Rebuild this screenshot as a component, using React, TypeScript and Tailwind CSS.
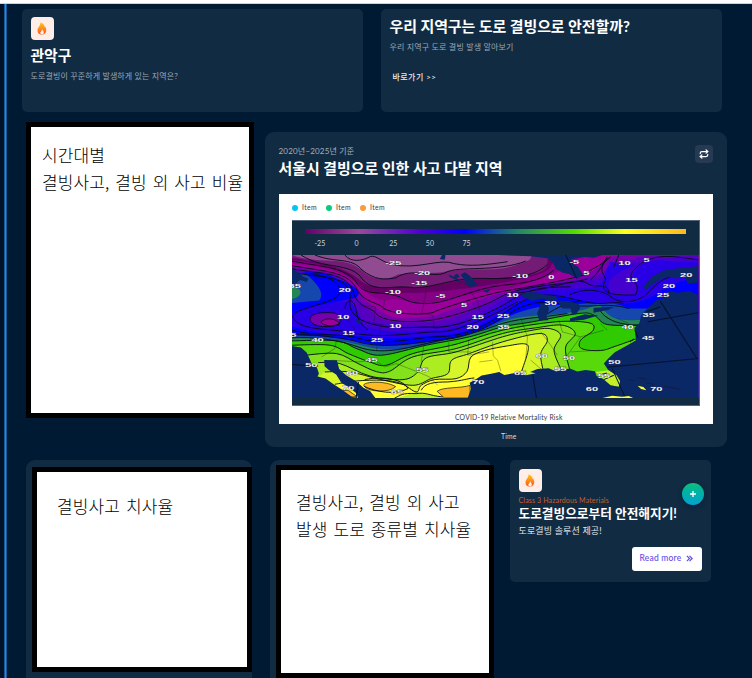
import React from "react";
import { Repeat } from "lucide-react";

type Point = [number, number];

// Catmull-Rom curve through the given points, as an SVG path.
function curve(points: Point[]) {
  let d = `M${points[0][0]},${points[0][1]}`;
  for (let i = 0; i < points.length - 1; i++) {
    const a = points[i - 1] ?? points[i];
    const b = points[i];
    const c = points[i + 1];
    const e = points[i + 2] ?? c;
    d += ` C${b[0] + (c[0] - a[0]) / 6},${b[1] + (c[1] - a[1]) / 6} ${c[0] - (e[0] - b[0]) / 6},${c[1] - (e[1] - b[1]) / 6} ${c[0]},${c[1]}`;
  }
  return d;
}

// Each temperature band covers everything below its upper edge.
const coldBands: [string, string][] = [
  ["#741b76", "M21,30 C100,60 180,30 230,75 C265,110 310,105 340,88 C400,80 450,87 480,80 C540,66 630,82 690,62 S735,45 745,30 L1244,30"],
  ["#650065", "M21,38 C100,50 180,65 225,105 C260,140 320,118 390,128 C450,128 500,102 600,100 S790,92 790,55 S820,40 830,30 L1244,30"],
  ["#840084", "M21,45 C120,55 190,80 230,125 C260,160 330,140 400,143 C500,138 600,122 640,115 S790,90 800,65 S850,50 860,30 L1244,30"],
  ["#9b009b", "M21,55 C120,65 180,80 220,120 C260,160 290,165 300,167 C350,150 360,180 430,173 S590,135 640,135 S800,90 835,75 S880,50 890,30 L1244,30"],
  ["#7700ad", "M21,62 C120,75 180,85 220,135 C240,175 280,190 300,205 C320,222 380,222 430,215 S590,155 650,145 S800,115 850,105 S955,70 965,38 L1030,30 L1244,30"],
  ["#5600c0", "M21,70 C120,85 175,85 210,140 C235,190 260,190 275,215 C320,238 380,232 440,230 S590,185 660,150 S800,120 860,108 S945,98 985,60 L1070,35 L1244,30"],
  ["#4300cf", "M21,80 C120,95 170,90 195,145 C220,200 200,190 240,225 C320,245 380,240 440,242 S590,210 660,160 S820,124 890,110 S960,110 995,60 C1080,50 1120,35 1244,40"],
  ["#2900e5", "M21,205 C50,175 120,175 190,170 C240,195 210,232 250,248 C320,268 400,256 460,255 S590,218 665,175 S800,132 890,130 S950,90 980,50 L1055,60 C980,90 970,110 975,130 C980,155 1030,155 1055,145 C1080,110 1020,110 1060,70 S1150,55 1244,50"],
  ["#0000ff", "M21,245 C100,267 160,270 235,273 C320,288 400,272 470,270 S600,236 675,190 S800,148 890,165 S1030,180 1080,165 S1160,105 1244,98"],
  ["#1547ad", "M21,272 C100,270 180,280 245,294 C320,310 400,292 480,284 S590,255 650,225 S760,180 850,178 S980,165 1035,190 L1244,190"],
  ["#238653", "M21,278 C90,275 180,286 240,303 C320,325 400,305 480,285 S590,257 650,232 S780,215 870,200 S930,160 965,200 S1040,220 1244,220"],
];

const warmBands: [string, Point[]][] = [
  ["#30ca00", [[21, 287], [155, 287], [220, 312], [290, 330], [425, 300], [555, 275], [655, 245], [745, 230], [885, 205], [930, 210], [970, 238], [1070, 240]]],
  ["#57d90b", [[21, 300], [135, 300], [190, 325], [255, 350], [305, 360], [385, 325], [515, 297], [655, 255], [815, 230], [915, 233], [928, 255], [890, 285], [893, 310], [950, 316], [995, 303], [1060, 280]]],
  ["#83e21b", [[60, 330], [155, 325], [220, 355], [275, 379], [315, 378], [385, 335], [515, 310], [655, 265], [755, 248], [835, 240], [874, 265], [845, 305], [855, 365], [862, 376]]],
  ["#aced22", [[100, 352], [165, 355], [255, 392], [355, 403], [400, 380], [425, 338], [515, 320], [655, 275], [735, 257], [795, 250], [830, 270], [810, 315], [832, 374]]],
  ["#d6f52a", [[120, 380], [195, 380], [285, 402], [385, 420], [440, 400], [490, 385], [502, 345], [555, 325], [655, 290], [765, 265], [790, 285], [770, 325], [777, 374]]],
  ["#ffff32", [[150, 417], [215, 407], [295, 405], [350, 415], [395, 440], [410, 420], [450, 403], [515, 400], [548, 378], [560, 335], [605, 315], [670, 302], [722, 296], [732, 315], [710, 385]]],
];

const lines = [
  "M180,30 C200,55 235,45 250,38 C270,25 280,45 320,58 C400,76 465,38 510,56 C560,65 600,60 670,50",
  "M90,30 C150,55 200,35 232,75 C270,105 300,105 335,98 C380,65 450,102 485,82 S640,82 725,48",
  "M48,30 C120,77 200,48 235,105 C275,145 320,118 390,128 C450,128 510,96 600,100 S760,90 790,58",
  "M21,48 C110,66 190,65 220,120 C250,158 300,132 355,160 C410,190 475,170 520,155 S610,125 660,120 S770,110 810,75",
  "M21,62 C125,80 190,80 216,132 C240,175 280,170 298,190 C330,210 430,210 450,200 S600,150 650,140 S810,115 900,90",
  "M21,71 C105,88 180,78 205,138 C220,195 260,180 280,212 C320,235 400,230 440,225 S590,190 650,155 S850,120 910,102",
  "M21,80 C90,100 165,87 190,130 C210,165 170,185 230,225 C310,260 390,243 450,246 S610,210 680,166 S790,128 860,125",
  "M75,85 C115,90 175,110 165,145 C155,175 20,190 23,215 C40,255 120,250 190,260 C290,285 400,259 460,260 S620,215 700,170",
  "M75,226 C73,201 115,202 140,203 C165,203 172,220 162,238 C140,248 85,248 75,226",
  "M180,190 C185,160 205,160 213,188 C215,215 228,240 250,255",
  "M21,255 C100,277 170,260 235,283 C310,302 390,276 470,274 S610,240 680,190 S800,143 880,165 S980,165 1020,175",
  "M21,266 C100,270 170,275 235,294 C320,312 410,289 480,283 S610,246 680,203 S800,170 860,180 S970,170 1035,190",
  "M21,278 C90,274 165,285 220,305 C290,330 360,310 430,294 S560,269 630,243 S760,220 850,205",
  "M240,403 C300,390 360,405 370,430 C330,450 275,440 238,423",
  "M410,435 C420,413 450,410 490,410 C540,406 545,400 570,398",
  "M395,445 C350,442 350,450 330,458 M395,445 C425,440 430,450 475,455",
  "M970,36 C930,90 980,90 960,115 C950,150 1000,150 1055,150 C1080,100 1010,110 1060,65 S1180,35 1244,45",
  "M855,150 C920,120 965,145 975,150 C1010,185 1070,165 1085,150 C1130,110 1130,90 1244,85",
  "M900,90 C930,65 960,60 970,38 M920,105 C960,65 945,65 980,35 M690,145 C820,130 880,95 910,115 S970,105 975,145",
  "M780,212 C830,180 850,175 885,168 M945,190 C960,220 1000,240 1065,240",
];

const borders =
  "M28,65 L35,120 M225,180 L272,185 L268,235 L297,240 M300,165 L295,195 M425,137 L412,205 M412,205 L445,210 L450,250 L535,235 M560,142 L580,170 L590,225 M290,235 L275,315 M420,290 L410,350 M493,292 L493,320 L560,320 M553,285 L550,330 L615,320 M155,285 L150,310 L110,335 M190,225 L210,250 L200,275 M140,345 L220,350 L270,345 L300,365 L335,355 L400,380 L435,395 L460,420 M625,290 L627,332 L640,345 L650,378 M585,350 L625,345 M710,220 L730,275 L725,340 M770,260 L800,300 L820,330 M825,225 L835,260 L890,275 L850,330 M890,275 L960,255 M950,235 L970,255 M740,345 L775,375 M860,320 L950,315 M1000,220 L1035,235";

const labels: [string, number, number][] = [
  ["-25", 326, 59], ["-20", 413, 89], ["-15", 404, 121], ["-10", 325, 147], ["-5", 468, 160],
  ["20", 180, 140], ["35", 29, 128], ["0", 343, 206], ["5", 539, 187], ["10", 175, 223],
  ["10", 332, 249], ["15", 580, 221], ["15", 191, 268], ["20", 565, 251], ["25", 277, 290],
  ["35", 16, 275], ["40", 98, 290], ["45", 260, 349], ["50", 79, 364], ["60", 202, 389],
  ["55", 413, 381], ["70", 190, 433], ["65", 337, 445], ["70", 582, 416],
  ["-5", 871, 56], ["10", 1022, 59], ["5", 1089, 52], ["-10", 708, 98], ["0", 802, 103],
  ["5", 907, 90], ["15", 1043, 110], ["20", 1208, 95], ["20", 1156, 129], ["25", 1138, 157],
  ["10", 685, 156], ["30", 800, 181], ["25", 657, 220], ["35", 1095, 215], ["35", 658, 252],
  ["40", 1031, 250], ["45", 1093, 283], ["60", 773, 338], ["50", 855, 344], ["50", 992, 357],
  ["55", 829, 376], ["65", 708, 390], ["55", 960, 398], ["60", 924, 437], ["70", 1118, 437],
];

function WeatherMap() {
  return (
    <svg className="block h-[143px] w-full" viewBox="21 30 1224 428" preserveAspectRatio="none">
      <rect x="21" y="30" width="1224" height="428" fill="#904b91" />
      {coldBands.map(([fill, d]) => (
        <path key={fill} d={d + " L1244,458 L21,458 Z"} fill={fill} />
      ))}
      {warmBands.map(([fill, points]) => (
        <path key={fill} d={curve(points) + " V458 H21 Z"} fill={fill} />
      ))}
      <path d="M862,376 C840,345 842,325 845,305 L880,285 L893,310 L950,316 L995,303 L1060,280 L1060,440 L862,440 Z" fill="#57d90b" />
      <path d="M935,380 L975,375 L1000,390 L1009,407 L1005,424 L980,420 Z" fill="#c5ef28" />
      <path d="M21,92 C70,75 110,75 155,100 C205,118 240,140 213,158 C140,175 80,181 21,206 Z" fill="#0000ff" />
      <path d="M21,78 L65,88 C98,117 120,143 103,166 L21,174 Z" fill="#1547ad" />
      <path d="M21,123 C56,130 54,155 21,162 Z" fill="#238653" />
      <path d="M75,226 C73,201 115,202 140,203 C165,203 172,220 162,238 C140,248 85,248 75,226 Z" fill="#7700ad" />
      <path d="M108,230 C125,214 158,222 164,236 C144,246 115,243 108,230 Z" fill="#9b009b" stroke="#080d19" strokeWidth="2.5" />
      <path d="M340,458 L395,440 L480,458 Z" fill="#b8f024" />
      <path d="M240,424 C220,410 300,403 333,424 C316,443 250,440 240,424 Z M160,435 L190,435 L217,454 L198,455 Z M458,438 C475,424 530,430 557,420 L558,458 L480,458 Z" fill="#ffb923" stroke="#080d19" strokeWidth="2" />
      <g fill="none" stroke="#080d19" strokeWidth="2.8">
        {lines.map((d) => <path key={d} d={d} />)}
        {warmBands.map(([fill, points]) => <path key={fill} d={curve(points)} />)}
      </g>
      <path d={borders} fill="none" stroke="#101820" strokeOpacity=".55" strokeWidth="1.8" />
      <g fill="#0a2766">
        <path d="M1244,150 L1217,138 L1180,143 L1155,137 L1142,159 L1117,166 L1102,181 L1085,195 L1072,212 L1067,234 L1052,248 L1057,285 L1031,300 L993,321 L972,341 L960,355 L973,374 L998,390 L1009,407 L1005,424 L980,420 L958,401 L938,392 L933,378 L905,374 L880,379 L858,370 L831,374 L817,379 L794,369 L760,371 L738,380 L755,384 L725,390 L700,382 L660,389 L645,380 L617,386 L592,391 L575,402 L556,412 L560,430 L550,458 L1244,458 Z" />
        <path d="M21,302 L48,307 L65,322 L76,345 L80,355 L96,367 L102,385 L98,394 L122,400 L145,416 L173,434 L202,455 L225,458 L21,458 Z" />
        <path d="M118,344 L156,345 L163,371 L184,390 L214,408 L236,427 L256,437 L272,458 L220,458 L214,443 L190,424 L170,413 L154,388 L132,374 L119,363 Z" />
        <path d="M21,72 L38,80 L55,95 L70,100 L66,111 L46,105 L26,119 L21,116 Z M492,88 L506,94 L520,99 L526,94 L518,86 L508,92 L530,110 L548,118 L529,88 L542,82 L559,94 L579,118 L571,124 L557,125 L540,115 L522,108 L496,96 Z M595,138 L620,131 L610,143 Z M473,30 L483,30 L481,44 L466,42 Z M213,222 L233,228 L224,236 L216,231 Z" />
        <path d="M640,30 L740,34 L790,40 L808,54 L815,72 L837,83 L855,87 L881,101 L897,88 L882,65 L868,58 L862,42 L905,36 L930,38 L955,30 Z" />
        <path d="M708,151 L726,141 L760,142 L782,150 L812,153 L823,163 L800,170 L778,160 L742,167 Z M770,175 L789,177 L795,192 L787,213 L793,225 L765,226 L759,205 L765,190 Z M819,166 L855,168 L885,178 L889,188 L877,207 L864,208 L860,190 L835,190 Z M858,220 L902,207 L943,211 L900,224 L858,228 Z M929,188 L991,185 L975,194 L929,203 Z" />
        <path d="M1078,125 L1105,95 L1145,74 L1174,71 L1244,63 L1244,112 L1212,116 L1205,96 L1178,100 L1146,95 L1113,113 L1086,135 Z M1199,154 L1226,147 L1214,160 Z" />
      </g>
      <path d="M946,390 L969,383 M960,403 L990,390 M1054,255 L1063,278 M1038,290 L1051,281 M1090,200 L1130,185" stroke="#0a1020" strokeWidth="3" />
      <path d="M845,30 L878,100 M746,389 L757,458 M985,370 L1025,458 M1130,168 L1240,340 M1092,230 L1244,203 M970,366 L1244,340 M21,358 L100,362 M221,410 L214,458 M1005,30 L990,65" stroke="#07122b" strokeWidth="3" />
      <path d="M956,458 L985,451 L1015,454 L1035,452 L1048,458 Z M1062,421 L1079,425 L1088,435 L1072,431 Z" fill="#ffff32" />
      <path d="M1036,403 L1052,406 M1063,397 L1087,402 M1088,412 L1112,418 M1142,423 L1190,432" stroke="#151e3e" strokeWidth="3" />
      <g fill="#eef0f6" stroke="#383850" strokeWidth="1.2" paintOrder="stroke" fontFamily="Liberation Sans, Arial, sans-serif" fontSize="18" fontWeight="bold" textAnchor="middle">
        {labels.map(([t, x, y]) => (
          <text key={t + x + y} transform={`translate(${x} ${y}) scale(1.85 1)`}>{t}</text>
        ))}
      </g>
    </svg>
  );
}

function FlameBadge() {
  return (
    <div className="flex size-[23px] items-center justify-center rounded-[4px] bg-[#ffede7]">
      <svg className="h-[13px] w-[10px]" viewBox="0 0 20 26">
        <defs>
          <linearGradient id="flame" x1="0" y1="0" x2="0" y2="1">
            <stop offset="0" stopColor="#ffc514" />
            <stop offset=".5" stopColor="#ff8b16" />
            <stop offset="1" stopColor="#ff5320" />
          </linearGradient>
        </defs>
        <path d="M7 1 C13 3 15 6 15 10 L16.5 9 C18.5 13 19 16 18 20 C16 24 12 25.5 9.5 25.5 C4 25 1 22 1 17 C1 11 7 8 7 1Z" fill="url(#flame)" />
        <path d="M10 14 C11 17 13.500 18 13.500 21 C13.500 24 12 25 10 25 C7.500 25 6.500 22 6.500 20 L8 20 C8 18 10 17 10 14Z" fill="#fff1e6" />
      </svg>
    </div>
  );
}

function Note({ className, children }: { className: string; children: React.ReactNode }) {
  return (
    <div className={"shrink-0 whitespace-nowrap border-[5px] border-black bg-white font-['Noto_Sans_CJK_KR',sans-serif] text-[17px] font-light leading-[27px] tracking-[0.12px] text-black [word-spacing:2px] " + className}>
      {children}
    </div>
  );
}

export default function App() {
  return (
    <div className="flex h-[678px] w-[752px] flex-col overflow-hidden bg-[#001a33] font-[Lato,'Noto_Sans_CJK_KR',sans-serif] text-white">
      <div className="h-1 shrink-0 border-b border-[#cbd1d5] bg-white" />
      <div className="flex min-h-0 flex-1">
        <div className="w-1 shrink-0 bg-[#001329]" />
        <div className="w-[3px] shrink-0 border-x border-[#155b9b] bg-[#1492f0]" />
        <main className="min-w-0 flex-1">
          <section className="ml-[14.5px] mt-[5px] flex h-[102.5px] gap-[17.5px] whitespace-nowrap">
            <div className="w-[341.5px] rounded-[5px] bg-[#112b43] pl-[9px] pt-[8px]">
              <FlameBadge />
              <h2 className="mt-[6px] text-[14.8px] font-bold leading-[18px]">관악구</h2>
              <p className="mt-[6px] text-[8px] leading-[12px] tracking-[0.14px] text-[#9ba9b7]">도로결빙이 꾸준하게 발생하게 있는 지역은?</p>
            </div>
            <div className="w-[341.5px] rounded-[5px] bg-[#112b43] pl-[9px] pt-[8px]">
              <h2 className="text-[15px] font-bold leading-[18px] tracking-[-0.1px]">우리 지역구는 도로 결빙으로 안전할까?</h2>
              <p className="mt-[6px] text-[8px] leading-[12px] tracking-[0.17px] text-[#9ba9b7]">우리 지역구 도로 결빙 발생 알아보기</p>
              <a className="ml-[3px] mt-[18px] block text-[8px] font-medium leading-[12px] tracking-[0.45px] text-[#e8edf1]">바로가기 &gt;&gt;</a>
            </div>
          </section>

          <section className="ml-[19px] mt-[10.5px] flex items-start gap-[11px]">
            <Note className="h-[296px] w-[228px] pl-[11px] pt-[14px]">
              <p>시간대별</p>
              <p>결빙사고, 결빙 외 사고 비율</p>
            </Note>
            <div className="mt-[10px] h-[314.5px] w-[461.5px] shrink-0 rounded-[9px] bg-[#112b43] px-[13.5px] pt-[12.5px]">
              <header className="flex h-[49.5px] items-start justify-between whitespace-nowrap">
                <div>
                  <p className="text-[8px] leading-[12px] tracking-[0.19px] text-[#a5b1bd]">2020년~2025년 기준</p>
                  <h2 className="mt-[2.5px] text-[14.93px] font-bold leading-[18px]">서울시 결빙으로 인한 사고 다발 지역</h2>
                </div>
                <button className="mt-[0.5px] flex size-[18px] items-center justify-center rounded-[4px] bg-[#263a53]">
                  <Repeat size={10} strokeWidth={3} />
                </button>
              </header>
              <div className="h-[230px] w-[434.5px] bg-white px-[13.5px] text-[#34383c]">
                <div className="flex h-[26px] items-center gap-[9px] pt-[1px] text-[6.8px]">
                  {["bg-[#05c3f5]", "bg-[#0acb7c]", "bg-[#f99c3a]"].map((c) => (
                    <span key={c} className="flex items-center gap-[4px] tracking-[0.4px]">
                      <i className={"size-[6px] rounded-full " + c} />Item
                    </span>
                  ))}
                </div>
                <div className="h-[186px] border border-l-0 border-[#52677c] bg-[#112b43]">
                  <div className="ml-[12.5px] mt-[8px] h-[5px] w-[381.5px] bg-[linear-gradient(90deg,#64006b_0%,#984b98_14%,#5100d0_30%,#0000ff_42%,#1551a7_50%,#248764_56%,#56dc00_71%,#ffff20_84%,#ffb820_100%)]" />
                  <div className="ml-[9.5px] flex h-[21px] pt-[4px] text-[7px] leading-[10px] text-[#ccd6dd]">
                    {["-25", "0", "25", "50", "75"].map((t) => <span key={t} className="w-[36.7px] text-center">{t}</span>)}
                  </div>
                  <WeatherMap />
                </div>
                <p className="pl-[26px] pt-[6.5px] text-center text-[6.8px] leading-[9px] tracking-[0.23px]">COVID-19 Relative Mortality Risk</p>
              </div>
              <p className="pl-[26px] pt-[8px] text-center text-[6.8px] leading-[9px] tracking-[0.15px] text-[#d7dee4]">Time</p>
            </div>
          </section>

          <section className="ml-[19px] mt-[13.5px] flex items-start">
            <div className="h-[232px] w-[225.5px] shrink-0 rounded-[9px] bg-[#112b43] pl-[6px] pt-[7px]">
              <Note className="h-[205px] w-[220px] pl-[20px] pt-[20px]"><p>결빙사고 치사율</p></Note>
            </div>
            <div className="ml-[18.5px] h-[232px] w-[222px] shrink-0 rounded-[9px] bg-[#112b43] pl-[6px] pt-[5px]">
              <Note className="h-[213px] w-[218px] pl-[15px] pt-[18px]">
                <p>결빙사고, 결빙 외 사고</p>
                <p>발생 도로 종류별 치사율</p>
              </Note>
            </div>
            <div className="ml-[17.5px] flex h-[121.5px] w-[201.5px] shrink-0 flex-col rounded-[5px] bg-[#112b43] px-[9px] pt-[8.5px]">
              <div className="flex h-[36px] justify-between">
                <FlameBadge />
                <button className="-mr-[2px] mt-[14px] flex size-[22px] items-center justify-center rounded-full bg-linear-to-b from-[#12bd7b] to-[#07a1d0] shadow-[0_2px_5px_#00132966]">
                  <svg className="size-[6px]" viewBox="0 0 6 6"><path d="M3 0V6M0 3H6" stroke="white" strokeWidth="1.3" /></svg>
                </button>
              </div>
              <p className="-mt-[9px] text-[7px] leading-[9px] tracking-[0.15px] text-[#cd5b26]">Class 3 Hazardous Materials</p>
              <h2 className="whitespace-nowrap text-[12.7px] font-bold leading-[17px]">도로결빙으로부터 안전해지기!</h2>
              <p className="mt-[2.5px] text-[9px] leading-[13px] tracking-[0.15px] text-[#e2e7eb]">도로결빙 솔루션 제공!</p>
              <button className="mt-[9.5px] flex h-[24px] w-[70px] items-center gap-[5px] self-end whitespace-nowrap rounded-[3px] bg-white pl-[7.5px] text-[8.5px] font-medium tracking-[0.2px] text-[#654ee8]">
                Read more
                <svg className="size-[7px]" viewBox="0 0 8 8"><path d="M1 1L4 4L1 7M4 1L7 4L4 7" fill="none" stroke="currentColor" strokeWidth="1.4" /></svg>
              </button>
            </div>
          </section>
        </main>
      </div>
    </div>
  );
}
